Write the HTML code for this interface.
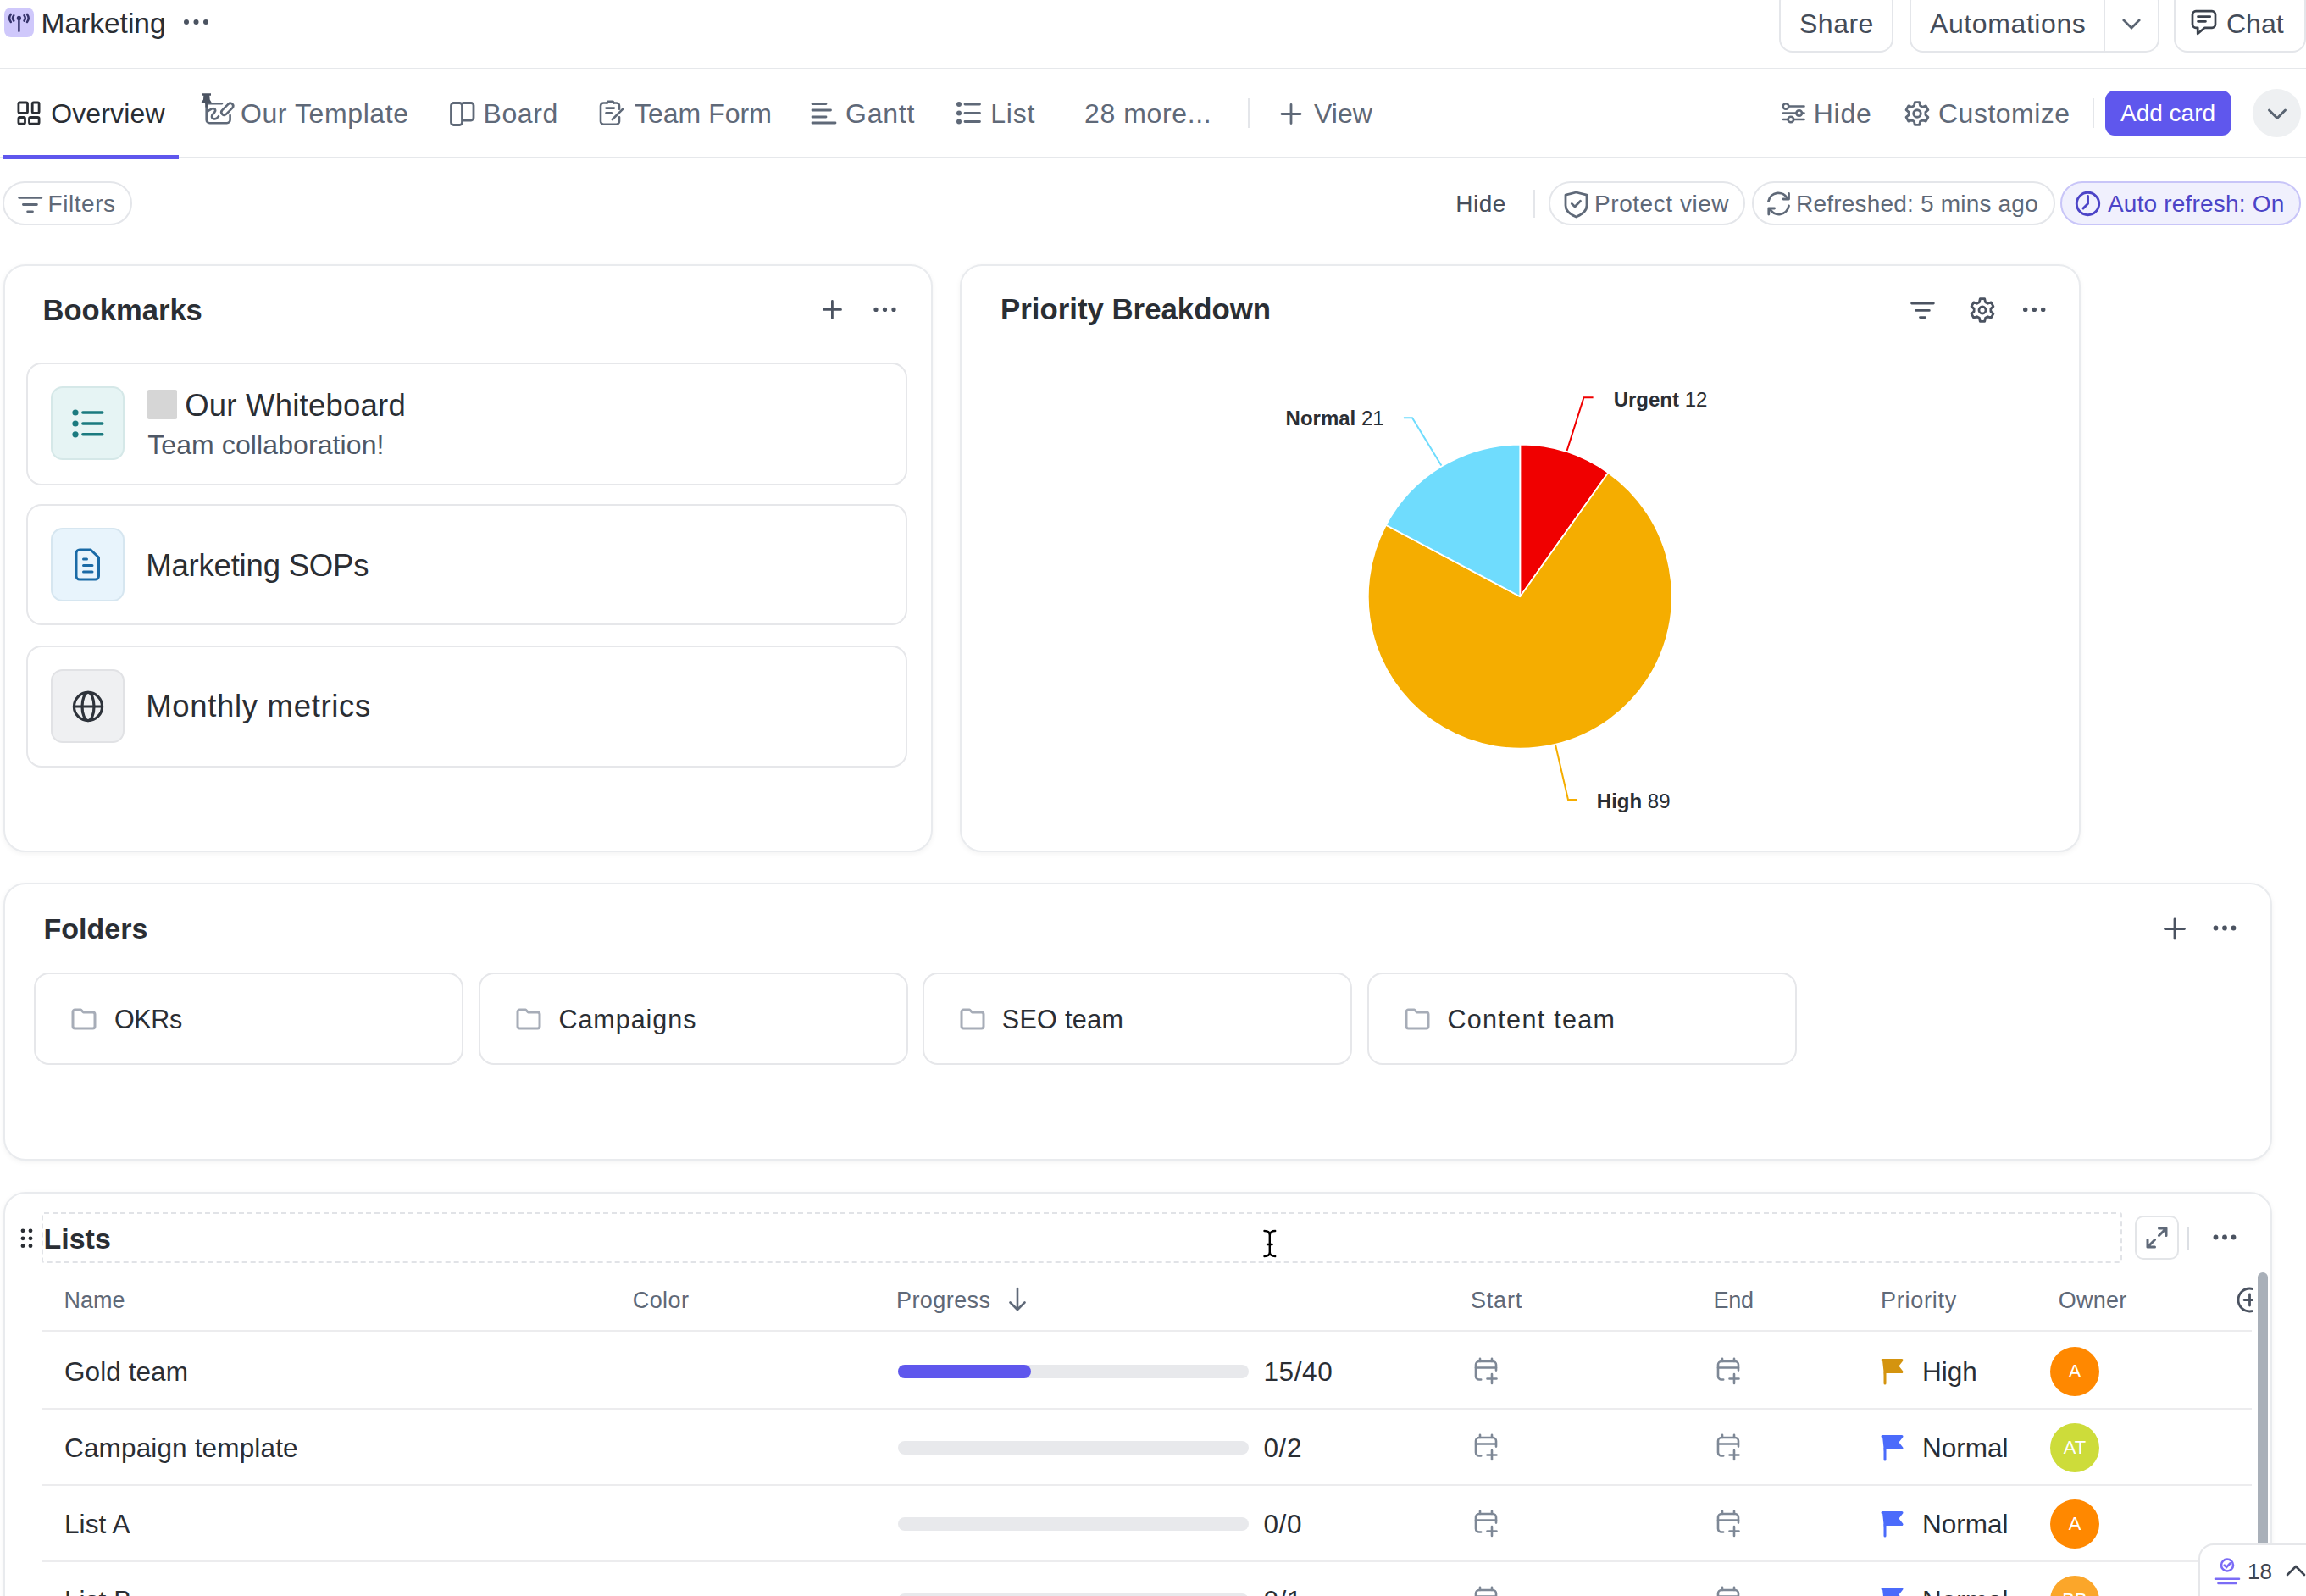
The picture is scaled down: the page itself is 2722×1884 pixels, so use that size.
<!DOCTYPE html>
<html><head><meta charset="utf-8">
<style>
html,body{margin:0;padding:0;width:2722px;height:1884px;overflow:hidden;background:#fff;}
body{position:relative;font-family:"Liberation Sans",sans-serif;color:#2a2e34;}
.t{position:absolute;line-height:1;white-space:nowrap;}
.a{position:absolute;}
.g{color:#5f6978;}
svg{position:absolute;overflow:visible;}
.btn{position:absolute;border:2px solid #e4e6ea;border-radius:14px;box-sizing:border-box;background:#fff;}
.pill{position:absolute;border:2px solid #e4e6ea;border-radius:26px;box-sizing:border-box;background:#fff;}
.card{position:absolute;border:2px solid #e9ebee;border-radius:26px;box-sizing:border-box;background:#fff;box-shadow:0 2px 6px rgba(0,0,0,0.05);}
.bm{position:absolute;border:2px solid #e6e7ea;border-radius:18px;box-sizing:border-box;background:#fff;left:31px;width:1040px;}
.ib{position:absolute;left:27px;width:87px;height:87px;border-radius:14px;box-sizing:border-box;border:2px solid #e3e6ea;}
.fd{position:absolute;top:1148px;height:109px;width:507px;border:2px solid #e6e7ea;border-radius:18px;box-sizing:border-box;background:#fff;}
.hl{position:absolute;height:2px;background:#ececee;left:49px;width:2609px;}
.bar{position:absolute;left:1060px;width:414px;height:16px;border-radius:8px;background:#e8e9ec;}
</style></head><body>

<!-- ===== TOP BAR ===== -->
<div class="a" style="left:5px;top:9px;width:35px;height:35px;border-radius:8px;background:#cfc8fb;"></div>
<svg style="left:5px;top:9px" width="35" height="35" viewBox="0 0 35 35">
  <g fill="none" stroke="#35336b" stroke-width="2.5" stroke-linecap="round">
    <line x1="17.4" y1="13" x2="17.4" y2="27.8"/>
    <path d="M7.8 7.9 Q4.4 12.4 7.8 16.9"/><path d="M11.3 9.2 Q8.7 12.4 11.3 15.6"/>
    <path d="M23.5 9.2 Q26.1 12.4 23.5 15.6"/><path d="M27 7.9 Q30.4 12.4 27 16.9"/>
  </g>
  <circle cx="17.4" cy="12.4" r="2.6" fill="#35336b"/>
</svg>
<div class="t" style="left:48.5px;top:11.4px;font-size:33.5px;">Marketing</div>
<svg style="left:216px;top:22px" width="32" height="8"><circle cx="4" cy="4" r="3" fill="#4b5361"/><circle cx="15.5" cy="4" r="3" fill="#4b5361"/><circle cx="27" cy="4" r="3" fill="#4b5361"/></svg>

<div class="btn" style="left:2100px;top:-14px;width:135px;height:76px;border-radius:16px"></div>
<div class="t" style="left:2124.0px;top:12.4px;font-size:32px;color:#444c59;letter-spacing:0.50px">Share</div>
<div class="btn" style="left:2254px;top:-14px;width:295px;height:76px;border-radius:16px"></div>
<div class="a" style="left:2483px;top:0;width:2px;height:60px;background:#e4e6ea"></div>
<div class="t" style="left:2278.0px;top:12.4px;font-size:32px;color:#444c59;letter-spacing:0.60px">Automations</div>
<svg style="left:2502px;top:20px" width="26" height="16" viewBox="0 0 26 16"><path d="M4 3 L14 13 L24 3" fill="none" stroke="#5a6472" stroke-width="2.7" stroke-linecap="butt" stroke-linejoin="miter"/></svg>
<div class="btn" style="left:2566px;top:-14px;width:156px;height:76px;border-radius:16px"></div>
<svg style="left:2586px;top:11px" width="32" height="32" viewBox="0 0 32 32"><path d="M6 2.2 H25 a4 4 0 0 1 4 4 V17.8 a4 4 0 0 1 -4 4 H16.5 L8.2 28.8 V21.8 H6 a4 4 0 0 1 -4 -4 V6.2 a4 4 0 0 1 4 -4 Z M8.5 8.7 H22.7 M8.5 14.3 H17.5" fill="none" stroke="#3b424d" stroke-width="2.7" stroke-linejoin="round" stroke-linecap="round"/></svg>
<div class="t" style="left:2628px;top:12.4px;font-size:32px;color:#444c59">Chat</div>

<div class="a" style="left:0;top:80px;width:2722px;height:2px;background:#e6e8eb"></div>

<!-- ===== TABS ===== -->
<!-- overview icon -->
<svg style="left:20px;top:119px" width="28" height="29" viewBox="0 0 28 29"><g fill="none" stroke="#2a2e34" stroke-width="2.8" stroke-linejoin="round">
<rect x="1.9" y="2" width="10.6" height="12.4" rx="1.6"/><rect x="18.2" y="2" width="7.9" height="12.4" rx="1.6"/>
<rect x="1.9" y="19.5" width="7.6" height="7.6" rx="1.6"/><rect x="14.5" y="19.5" width="11.6" height="7.6" rx="1.6"/></g></svg>
<div class="t" style="left:60.2px;top:118.4px;font-size:32px;letter-spacing:0.14px">Overview</div>
<!-- our template icon -->
<svg style="left:230px;top:105px" width="60" height="50" viewBox="0 0 60 50">
 <g fill="none" stroke="#5f6978" stroke-width="2.6" stroke-linecap="round" stroke-linejoin="round">
  <path d="M13.7 17.3 H31.8"/>
  <path d="M13.7 17.3 V36.5 a3.8 3.8 0 0 0 3.8 3.8 H37.8 a3.8 3.8 0 0 0 3.8 -3.8 V31"/>
  <path d="M14.8 26.8 C18 24.2 20.8 22 23 23.3 C25.5 25 23.5 27.6 21.5 29.5 C19.2 31.6 19.5 35.2 23 35.4 C25 35.5 26.8 33.8 28 32.2"/>
  <path d="M32.17 25.17 L39.67 17.67 A3.3 3.3 0 0 1 44.33 22.33 L36.83 29.83 A3.3 3.3 0 0 1 32.17 25.17 Z"/>
 </g>
 <path d="M8.5 5.2 H19 V7.7 H17.3 L17.7 12.5 L20 16.6 H7.2 L10 12.5 L10.3 7.7 H8.5 Z" fill="#4b5361"/>
 <path d="M13.6 16 V21.6" stroke="#4b5361" stroke-width="2.4"/>
</svg>
<div class="t g" style="left:284.0px;top:118.4px;font-size:32px;letter-spacing:0.59px">Our Template</div>
<!-- board -->
<svg style="left:531px;top:119px" width="30" height="30" viewBox="0 0 30 30"><path d="M14.5 2.5 H25 a3 3 0 0 1 3 3 V20 a3 3 0 0 1 -3 3 H14.5 M4.5 2.5 H11.5 a3 3 0 0 1 3 3 V25.5 a3 3 0 0 1 -3 3 H4.5 a3 3 0 0 1 -3 -3 V5.5 a3 3 0 0 1 3 -3 Z" fill="none" stroke="#5f6978" stroke-width="2.8" stroke-linejoin="round"/></svg>
<div class="t g" style="left:570.6px;top:118.4px;font-size:32px;letter-spacing:0.57px">Board</div>
<!-- team form -->
<svg style="left:690px;top:105px" width="60" height="50" viewBox="0 0 60 50"><g fill="none" stroke="#5f6978" stroke-width="2.6" stroke-linecap="round" stroke-linejoin="round">
<path d="M26.5 16.5 H22.5 a3.5 3.5 0 0 0 -3.5 3.5 V38.2 a3.5 3.5 0 0 0 3.5 3.5 H37.5 a3.5 3.5 0 0 0 3.5 -3.5 V33.2"/>
<path d="M34.5 16.5 H37.5 a3.5 3.5 0 0 1 3.5 3.5 V23.8"/>
<path d="M26.5 16.5 L27.6 14.7 H33.4 L34.5 16.5"/>
<path d="M25.5 22.6 H34.8 M25.5 28.4 H31.8 M32.8 36 L45 23.8"/></g></svg>
<div class="t g" style="left:749px;top:118.4px;font-size:32px;">Team Form</div>
<!-- gantt -->
<svg style="left:956px;top:119px" width="32" height="30" viewBox="0 0 32 30"><g stroke="#5f6978" stroke-width="2.8" stroke-linecap="round">
<path d="M3 3.5 H19 M3 11 H24.5 M3 19 H19 M3 26 H30"/></g></svg>
<div class="t g" style="left:998.0px;top:118.4px;font-size:32px;letter-spacing:0.75px">Gantt</div>
<!-- list -->
<svg style="left:1127px;top:119px" width="32" height="30" viewBox="0 0 32 30"><g fill="#5f6978"><circle cx="5" cy="4" r="3"/><circle cx="5" cy="14.5" r="3"/><circle cx="5" cy="24.5" r="3"/></g>
<g stroke="#5f6978" stroke-width="2.8" stroke-linecap="round"><path d="M12 4 H29.5 M12 14.5 H29.5 M12 24.5 H29.5"/></g></svg>
<div class="t g" style="left:1169.2px;top:118.4px;font-size:32px;letter-spacing:0.83px">List</div>
<div class="t g" style="left:1280.0px;top:118.4px;font-size:32px;letter-spacing:0.62px">28 more...</div>
<div class="a" style="left:1473px;top:116px;width:2px;height:35px;background:#e4e6ea"></div>
<svg style="left:1510px;top:121px" width="28" height="27" viewBox="0 0 28 27"><path d="M14 2.5 V24.5 M3 13.5 H25" stroke="#5f6978" stroke-width="2.8" stroke-linecap="round"/></svg>
<div class="t g" style="left:1551px;top:118.4px;font-size:32px;">View</div>

<!-- right side -->
<svg style="left:2102px;top:119px" width="30" height="28" viewBox="0 0 30 28"><g fill="none" stroke="#5f6978" stroke-width="2.6" stroke-linecap="round">
<path d="M9.5 6.5 H27.5 M3 14.5 H18 M25 14.5 H27.5 M3 22 H8 M15 22 H27.5"/><circle cx="6" cy="6.5" r="3.3"/><circle cx="21.7" cy="14.5" r="3.3"/><circle cx="11.9" cy="22" r="3.3"/></g></svg>
<div class="t g" style="left:2140.7px;top:118.4px;font-size:32px;letter-spacing:0.77px">Hide</div>
<svg style="left:2247px;top:118px" width="32" height="32" viewBox="0 0 24 24"><g fill="none" stroke="#5f6978" stroke-width="2.1" stroke-linejoin="round">
<path d="M10 2 H14 L14.7 5 L16.8 6.2 L19.7 5.2 L21.7 8.7 L19.4 10.8 V13.2 L21.7 15.3 L19.7 18.8 L16.8 17.8 L14.7 19 L14 22 H10 L9.3 19 L7.2 17.8 L4.3 18.8 L2.3 15.3 L4.6 13.2 V10.8 L2.3 8.7 L4.3 5.2 L7.2 6.2 L9.3 5 Z"/><circle cx="12" cy="12" r="3.2"/></g></svg>
<div class="t g" style="left:2288.0px;top:118.4px;font-size:32px;letter-spacing:0.50px">Customize</div>
<div class="a" style="left:2470px;top:116px;width:2px;height:35px;background:#e4e6ea"></div>
<div class="a" style="left:2485px;top:107px;width:149px;height:53px;border-radius:11px;background:#5f57ed"></div>
<div class="t" style="left:2503px;top:119.8px;font-size:28px;color:#fff">Add card</div>
<div class="a" style="left:2659px;top:105px;width:57px;height:57px;border-radius:50%;background:#eef0f2"></div>
<svg style="left:2676px;top:127px" width="24" height="16" viewBox="0 0 24 16"><path d="M2.5 3 L12 12.5 L21.5 3" fill="none" stroke="#5a6472" stroke-width="3" stroke-linecap="round" stroke-linejoin="round"/></svg>


<div class="a" style="left:0;top:185px;width:2722px;height:2px;background:#e6e8eb"></div>
<div class="a" style="left:3px;top:183px;width:208px;height:5px;background:#5f57ed"></div>

<!-- ===== PILLS ===== -->
<div class="pill" style="left:3px;top:214px;width:153px;height:52px;"></div>
<svg style="left:20px;top:229px" width="32" height="26" viewBox="0 0 32 26"><path d="M2.6 4.3 H28.9 M7.4 12.5 H23.4 M12.6 20.8 H18.5" stroke="#5f6978" stroke-width="2.8" stroke-linecap="round"/></svg>
<div class="t g" style="left:56.5px;top:226.8px;font-size:28px;letter-spacing:0.55px">Filters</div>
<div class="t g" style="left:1718.3px;top:226.8px;font-size:28px;color:#474f5c;letter-spacing:0.45px">Hide</div>
<div class="a" style="left:1810px;top:224px;width:2px;height:33px;background:#e4e6ea"></div>
<div class="pill" style="left:1828px;top:214px;width:232px;height:52px;"></div>
<svg style="left:1846px;top:225px" width="30" height="33" viewBox="0 0 30 33"><g fill="none" stroke="#5f6978" stroke-width="2.8" stroke-linejoin="round" stroke-linecap="round">
<path d="M14.5 2 L27 5.2 V17.5 C27 24 21 28.5 14.5 31 C8 28.5 2 24 2 17.5 V5.2 Z"/><path d="M9.3 15.5 L13 19 L19.5 12.2"/></g></svg>
<div class="t g" style="left:1882.1px;top:226.8px;font-size:28px;letter-spacing:0.54px">Protect view</div>
<div class="pill" style="left:2068px;top:214px;width:358px;height:52px;"></div>
<svg style="left:2084px;top:226px" width="32" height="29" viewBox="0 0 32 29"><g fill="none" stroke="#5f6978" stroke-width="2.8" stroke-linecap="round" stroke-linejoin="round">
<path d="M3.5 11.5 A12 12 0 0 1 26 8.5"/><path d="M27.5 2.5 V9 H21"/><path d="M27.5 17 A12 12 0 0 1 5 20.5"/><path d="M3.8 27 V20 H10.5"/></g></svg>
<div class="t g" style="left:2120.0px;top:226.8px;font-size:28px;letter-spacing:0.20px">Refreshed: 5 mins ago</div>
<div class="pill" style="left:2432px;top:214px;width:284px;height:52px;background:#f0f0fd;border-color:#c8c5f8"></div>
<svg style="left:2448px;top:224px" width="33" height="33" viewBox="0 0 33 33"><g fill="none" stroke="#4c44c7" stroke-width="2.9" stroke-linecap="round">
<circle cx="16.5" cy="16.5" r="13.2"/><path d="M16.5 7.5 V16.5 L11 22"/></g></svg>
<div class="t" style="left:2488.0px;top:226.8px;font-size:28px;color:#4c44c7;letter-spacing:0.19px">Auto refresh: On</div>


<!-- ===== BOOKMARKS ===== -->
<div class="card" style="left:4px;top:312px;width:1097px;height:694px;"></div>
<div class="t" style="left:50.5px;top:349px;font-size:34.6px;font-weight:700">Bookmarks</div>
<svg style="left:968px;top:351px" width="30" height="30" viewBox="0 0 30 30"><path d="M14.4 4.4 V24.6 M4.3 14.4 H24.5" stroke="#4b5361" stroke-width="2.8" stroke-linecap="round"/></svg>
<svg style="left:1029px;top:361px" width="32" height="9"><circle cx="5" cy="4.4" r="2.6" fill="#4b5361"/><circle cx="15.5" cy="4.4" r="2.6" fill="#4b5361"/><circle cx="26" cy="4.4" r="2.6" fill="#4b5361"/></svg>

<div class="bm" style="top:428px;height:145px;">
  <div class="ib" style="left:27px;top:26px;background:#e6f4f4;border-color:#d5e8e8"></div>
</div>
<svg style="left:82px;top:480px" width="44" height="40" viewBox="0 0 44 40"><g fill="#1b7a7f"><circle cx="7" cy="7" r="3.6"/><circle cx="7" cy="20" r="3.6"/><circle cx="7" cy="32.8" r="3.6"/></g>
<path d="M15.8 7 H38.8 M15.8 20 H38.8 M15.8 32.8 H38.8" stroke="#1b7a7f" stroke-width="3.4" stroke-linecap="round"/></svg>
<div class="a" style="left:174px;top:460px;width:35px;height:35px;border-radius:2px;background:#d6d6d6"></div>
<div class="t" style="left:218.2px;top:461.0px;font-size:36.5px;letter-spacing:0.22px">Our Whiteboard</div>
<div class="t" style="left:174.2px;top:508.6px;font-size:32px;color:#4f5866;letter-spacing:0.10px">Team collaboration!</div>

<div class="bm" style="top:595px;height:143px;">
  <div class="ib" style="left:27px;top:26px;background:#e8f4fc;border-color:#d6e6f0"></div>
</div>
<svg style="left:88px;top:647px" width="32" height="40" viewBox="0 0 32 40"><g fill="none" stroke="#1a6aa6" stroke-width="3" stroke-linecap="round" stroke-linejoin="round">
<path d="M6 2 H19 L28.5 11 V33 a4 4 0 0 1 -4 4 H6 a4 4 0 0 1 -4 -4 V6 a4 4 0 0 1 4 -4 Z"/><path d="M10.5 13 H14.5 M10.5 20.5 H21 M10.5 28 H21"/></g></svg>
<div class="t" style="left:172.2px;top:649.8px;font-size:36.5px;letter-spacing:-0.19px">Marketing SOPs</div>

<div class="bm" style="top:762px;height:144px;">
  <div class="ib" style="left:27px;top:26px;background:#eff0f2;border-color:#e1e2e5"></div>
</div>
<svg style="left:84px;top:814px" width="40" height="40" viewBox="0 0 40 40"><g fill="none" stroke="#2e333b" stroke-width="3.2">
<circle cx="20" cy="20" r="16.6"/><ellipse cx="20" cy="20" rx="7" ry="16.6"/><path d="M3.4 20 H36.6"/></g></svg>
<div class="t" style="left:172.2px;top:816.4px;font-size:36.5px;letter-spacing:0.68px">Monthly metrics</div>


<!-- ===== PRIORITY ===== -->
<div class="card" style="left:1133px;top:312px;width:1323px;height:694px;"></div>
<div class="t" style="left:1181px;top:348.2px;font-size:34.8px;font-weight:700">Priority Breakdown</div>
<svg style="left:2253px;top:352px" width="34" height="28" viewBox="0 0 34 28"><path d="M3.6 6.1 H29.3 M8.6 14.4 H24.3 M13.5 22.6 H19.4" stroke="#4b5361" stroke-width="2.9" stroke-linecap="round"/></svg>
<svg style="left:2323.5px;top:349.5px" width="32" height="32" viewBox="0 0 24 24"><g fill="none" stroke="#4b5361" stroke-width="2.1" stroke-linejoin="round">
<path d="M10 2 H14 L14.7 5 L16.8 6.2 L19.7 5.2 L21.7 8.7 L19.4 10.8 V13.2 L21.7 15.3 L19.7 18.8 L16.8 17.8 L14.7 19 L14 22 H10 L9.3 19 L7.2 17.8 L4.3 18.8 L2.3 15.3 L4.6 13.2 V10.8 L2.3 8.7 L4.3 5.2 L7.2 6.2 L9.3 5 Z"/><circle cx="12" cy="12" r="3"/></g></svg>
<svg style="left:2386px;top:361px" width="32" height="9"><circle cx="4.7" cy="4.4" r="2.7" fill="#4b5361"/><circle cx="15.3" cy="4.4" r="2.7" fill="#4b5361"/><circle cx="25.7" cy="4.4" r="2.7" fill="#4b5361"/></svg>
<svg style="left:0;top:0" width="2722" height="1884"><path d="M1794.3 704.2 L1794.3 524.7 A179.5 179.5 0 0 1 1898.3 557.9 Z" fill="#f00000" stroke="#fff" stroke-width="1.8" stroke-linejoin="round"/><path d="M1794.3 704.2 L1898.3 557.9 A179.5 179.5 0 1 1 1635.9 619.8 Z" fill="#f5ad00" stroke="#fff" stroke-width="1.8" stroke-linejoin="round"/><path d="M1794.3 704.2 L1635.9 619.8 A179.5 179.5 0 0 1 1794.3 524.7 Z" fill="#6fdcfd" stroke="#fff" stroke-width="1.8" stroke-linejoin="round"/><path d="M1849.6 532 L1869.5 469.3 H1880.6" fill="none" stroke="#f00000" stroke-width="2"/><path d="M1701.4 549.6 L1667 493.2 H1656.9" fill="none" stroke="#6fdcfd" stroke-width="2"/><path d="M1836 879 L1851 944 H1862" fill="none" stroke="#f5ad00" stroke-width="2"/></svg>
<div class="t" style="left:1517.6px;top:482.2px;font-size:24px;"><b>Normal</b> 21</div>
<div class="t" style="left:1904.7px;top:460.4px;font-size:24px;"><b>Urgent</b> 12</div>
<div class="t" style="left:1884.8px;top:934.1px;font-size:24px;"><b>High</b> 89</div>


<!-- ===== FOLDERS ===== -->
<div class="card" style="left:4px;top:1042px;width:2678px;height:328px;"></div>
<div class="t" style="left:51.5px;top:1079.2px;font-size:34px;font-weight:700">Folders</div>
<svg style="left:2552px;top:1082px" width="30" height="30" viewBox="0 0 30 30"><path d="M15 3 V26 M3.5 14.5 H26.5" stroke="#4b5361" stroke-width="2.8" stroke-linecap="round"/></svg>
<svg style="left:2612px;top:1091px" width="32" height="9"><circle cx="3.5" cy="4.5" r="2.9" fill="#4b5361"/><circle cx="14" cy="4.5" r="2.9" fill="#4b5361"/><circle cx="24.5" cy="4.5" r="2.9" fill="#4b5361"/></svg>
<div class="fd" style="left:40px"></div><svg style="left:84px;top:1189px" width="32" height="28" viewBox="0 0 32 28"><path d="M4.5 3 H11.5 L14.5 6 H25.5 a2.5 2.5 0 0 1 2.5 2.5 V22.5 a2.5 2.5 0 0 1 -2.5 2.5 H4.5 a2.5 2.5 0 0 1 -2.5 -2.5 V5.5 a2.5 2.5 0 0 1 2.5 -2.5 Z" fill="none" stroke="#a7adb8" stroke-width="3" stroke-linejoin="round"/></svg><div class="t" style="left:135.0px;top:1187.7px;font-size:30.5px;letter-spacing:-0.40px">OKRs</div><div class="fd" style="left:565px"></div><svg style="left:609px;top:1189px" width="32" height="28" viewBox="0 0 32 28"><path d="M4.5 3 H11.5 L14.5 6 H25.5 a2.5 2.5 0 0 1 2.5 2.5 V22.5 a2.5 2.5 0 0 1 -2.5 2.5 H4.5 a2.5 2.5 0 0 1 -2.5 -2.5 V5.5 a2.5 2.5 0 0 1 2.5 -2.5 Z" fill="none" stroke="#a7adb8" stroke-width="3" stroke-linejoin="round"/></svg><div class="t" style="left:659.4px;top:1187.7px;font-size:30.5px;letter-spacing:0.97px">Campaigns</div><div class="fd" style="left:1089px"></div><svg style="left:1133px;top:1189px" width="32" height="28" viewBox="0 0 32 28"><path d="M4.5 3 H11.5 L14.5 6 H25.5 a2.5 2.5 0 0 1 2.5 2.5 V22.5 a2.5 2.5 0 0 1 -2.5 2.5 H4.5 a2.5 2.5 0 0 1 -2.5 -2.5 V5.5 a2.5 2.5 0 0 1 2.5 -2.5 Z" fill="none" stroke="#a7adb8" stroke-width="3" stroke-linejoin="round"/></svg><div class="t" style="left:1182.7px;top:1187.7px;font-size:30.5px;letter-spacing:0.36px">SEO team</div><div class="fd" style="left:1614px"></div><svg style="left:1658px;top:1189px" width="32" height="28" viewBox="0 0 32 28"><path d="M4.5 3 H11.5 L14.5 6 H25.5 a2.5 2.5 0 0 1 2.5 2.5 V22.5 a2.5 2.5 0 0 1 -2.5 2.5 H4.5 a2.5 2.5 0 0 1 -2.5 -2.5 V5.5 a2.5 2.5 0 0 1 2.5 -2.5 Z" fill="none" stroke="#a7adb8" stroke-width="3" stroke-linejoin="round"/></svg><div class="t" style="left:1708.4px;top:1187.7px;font-size:30.5px;letter-spacing:1.32px">Content team</div>
<!-- lists card -->
<div class="card" style="left:4px;top:1407px;width:2678px;height:600px;"></div>
<svg style="left:0;top:0" width="2722" height="1884"><rect x="50" y="1432" width="2454" height="58" rx="2" fill="none" stroke="#e1e3e7" stroke-width="2" stroke-dasharray="6 4"/></svg>
<svg style="left:22px;top:1448px" width="20" height="28"><g fill="#2a2e34"><circle cx="5" cy="4.8" r="2.4"/><circle cx="14" cy="4.8" r="2.4"/><circle cx="5" cy="13.8" r="2.4"/><circle cx="14" cy="13.8" r="2.4"/><circle cx="5" cy="22.7" r="2.4"/><circle cx="14" cy="22.7" r="2.4"/></g></svg>
<div class="t" style="left:51.5px;top:1444.8px;font-size:34px;font-weight:700">Lists</div>
<svg style="left:1490px;top:1450px" width="18" height="36" viewBox="0 0 18 36"><g fill="none" stroke="#000" stroke-width="2.4" stroke-linecap="round"><path d="M2.5 3 C6 3 8.8 4.5 8.8 8 V28 C8.8 31.5 6 33 2.5 33 M15.2 3 C11.6 3 8.8 4.5 8.8 8 M15.2 33 C11.6 33 8.8 31.5 8.8 28 M6 19 H11.6"/></g></svg>
<div class="a" style="left:2520px;top:1435px;width:52px;height:52px;border:2px solid #e3e5e8;border-radius:10px;box-sizing:border-box"></div>
<svg style="left:2532px;top:1447px" width="28" height="28" viewBox="0 0 28 28"><g fill="none" stroke="#5f6978" stroke-width="3" stroke-linecap="round" stroke-linejoin="round"><path d="M16.5 3 H25 V11.5 M25 3 L16.5 11.5 M3 16.5 V25 H11.5 M3 25 L11.5 16.5"/></g></svg>
<div class="a" style="left:2582px;top:1448px;width:2px;height:27px;background:#dcdfe4"></div>
<svg style="left:2612px;top:1456px" width="32" height="9"><circle cx="3.5" cy="4.5" r="2.9" fill="#4b5361"/><circle cx="14" cy="4.5" r="2.9" fill="#4b5361"/><circle cx="24.5" cy="4.5" r="2.9" fill="#4b5361"/></svg>

<div class="t g" style="left:75.6px;top:1522.4px;font-size:27px;letter-spacing:0.00px">Name</div>
<div class="t g" style="left:746.8px;top:1522.4px;font-size:27px;letter-spacing:0.40px">Color</div>
<div class="t g" style="left:1058.0px;top:1522.4px;font-size:27px;letter-spacing:0.43px">Progress</div>
<svg style="left:1188px;top:1518px" width="26" height="32" viewBox="0 0 26 32"><path d="M13 3 V28 M4.5 19.5 L13 28 L21.5 19.5" fill="none" stroke="#5f6978" stroke-width="2.6" stroke-linecap="round" stroke-linejoin="round"/></svg>
<div class="t g" style="left:1735.9px;top:1522.4px;font-size:27px;letter-spacing:0.85px">Start</div>
<div class="t g" style="left:2022.4px;top:1522.4px;font-size:27px;letter-spacing:-0.15px">End</div>
<div class="t g" style="left:2220.0px;top:1522.4px;font-size:27px;letter-spacing:0.76px">Priority</div>
<div class="t g" style="left:2429.7px;top:1522.4px;font-size:27px;letter-spacing:0.28px">Owner</div>
<div class="a" style="left:2638px;top:1517px;width:21px;height:36px;overflow:hidden"><svg style="left:0;top:0" width="36" height="36" viewBox="0 0 36 36"><g fill="none" stroke="#4b5361" stroke-width="2.8" stroke-linecap="round"><circle cx="17.5" cy="17.5" r="13.5"/><path d="M17.5 11 V24 M11 17.5 H24"/></g></svg></div>
<div class="hl" style="top:1570px"></div>
<div class="t" style="left:76px;top:1603.8px;font-size:31.5px;letter-spacing:0.08px">Gold team</div><div class="bar" style="top:1611.0px"></div><div class="a" style="left:1060px;top:1611.0px;width:157px;height:16px;border-radius:8px;background:#5f57ed"></div><div class="t" style="left:1491.5px;top:1603.8px;font-size:31.5px;letter-spacing:0.6px">15/40</div><svg style="left:1740px;top:1602.0px" width="30" height="34" viewBox="0 0 30 34"><g fill="none" stroke="#7e8896" stroke-width="2.6" stroke-linecap="round"><path d="M8.2 26.5 H6 a4 4 0 0 1 -4 -4 V9 a4 4 0 0 1 4 -4 H22 a4 4 0 0 1 4 4 V15.6"/><path d="M2 12.5 H26 M7 1.8 V5 M21 1.8 V5 M21 20 V31 M15.5 25.5 H26.5"/></g></svg><svg style="left:2025.5px;top:1602.0px" width="30" height="34" viewBox="0 0 30 34"><g fill="none" stroke="#7e8896" stroke-width="2.6" stroke-linecap="round"><path d="M8.2 26.5 H6 a4 4 0 0 1 -4 -4 V9 a4 4 0 0 1 4 -4 H22 a4 4 0 0 1 4 4 V15.6"/><path d="M2 12.5 H26 M7 1.8 V5 M21 1.8 V5 M21 20 V31 M15.5 25.5 H26.5"/></g></svg><svg style="left:2220px;top:1603.5px" width="28" height="32" viewBox="0 0 28 32"><path d="M2 1.5 H25 L19.5 8.5 L25 15.5 H5 V29" fill="#d4940f" stroke="#d4940f" stroke-width="3" stroke-linejoin="round" stroke-linecap="round"/></svg><div class="t" style="left:2269px;top:1603.8px;font-size:31.5px;">High</div><div class="a" style="left:2420px;top:1589.5px;width:58px;height:58px;border-radius:50%;background:#ff8800;color:#fff;font-size:22px;line-height:58px;text-align:center">A</div><div class="hl" style="top:1662.0px"></div>
<div class="t" style="left:76px;top:1693.8px;font-size:31.5px;letter-spacing:0.15px">Campaign template</div><div class="bar" style="top:1701.0px"></div><div class="t" style="left:1491.5px;top:1693.8px;font-size:31.5px;letter-spacing:0.6px">0/2</div><svg style="left:1740px;top:1692.0px" width="30" height="34" viewBox="0 0 30 34"><g fill="none" stroke="#7e8896" stroke-width="2.6" stroke-linecap="round"><path d="M8.2 26.5 H6 a4 4 0 0 1 -4 -4 V9 a4 4 0 0 1 4 -4 H22 a4 4 0 0 1 4 4 V15.6"/><path d="M2 12.5 H26 M7 1.8 V5 M21 1.8 V5 M21 20 V31 M15.5 25.5 H26.5"/></g></svg><svg style="left:2025.5px;top:1692.0px" width="30" height="34" viewBox="0 0 30 34"><g fill="none" stroke="#7e8896" stroke-width="2.6" stroke-linecap="round"><path d="M8.2 26.5 H6 a4 4 0 0 1 -4 -4 V9 a4 4 0 0 1 4 -4 H22 a4 4 0 0 1 4 4 V15.6"/><path d="M2 12.5 H26 M7 1.8 V5 M21 1.8 V5 M21 20 V31 M15.5 25.5 H26.5"/></g></svg><svg style="left:2220px;top:1693.5px" width="28" height="32" viewBox="0 0 28 32"><path d="M2 1.5 H25 L19.5 8.5 L25 15.5 H5 V29" fill="#4b6bfb" stroke="#4b6bfb" stroke-width="3" stroke-linejoin="round" stroke-linecap="round"/></svg><div class="t" style="left:2269px;top:1693.8px;font-size:31.5px;">Normal</div><div class="a" style="left:2420px;top:1679.5px;width:58px;height:58px;border-radius:50%;background:#cddc3a;color:#fff;font-size:22px;line-height:58px;text-align:center">AT</div><div class="hl" style="top:1752.0px"></div>
<div class="t" style="left:76px;top:1783.8px;font-size:31.5px;letter-spacing:0.08px">List A</div><div class="bar" style="top:1791.0px"></div><div class="t" style="left:1491.5px;top:1783.8px;font-size:31.5px;letter-spacing:0.6px">0/0</div><svg style="left:1740px;top:1782.0px" width="30" height="34" viewBox="0 0 30 34"><g fill="none" stroke="#7e8896" stroke-width="2.6" stroke-linecap="round"><path d="M8.2 26.5 H6 a4 4 0 0 1 -4 -4 V9 a4 4 0 0 1 4 -4 H22 a4 4 0 0 1 4 4 V15.6"/><path d="M2 12.5 H26 M7 1.8 V5 M21 1.8 V5 M21 20 V31 M15.5 25.5 H26.5"/></g></svg><svg style="left:2025.5px;top:1782.0px" width="30" height="34" viewBox="0 0 30 34"><g fill="none" stroke="#7e8896" stroke-width="2.6" stroke-linecap="round"><path d="M8.2 26.5 H6 a4 4 0 0 1 -4 -4 V9 a4 4 0 0 1 4 -4 H22 a4 4 0 0 1 4 4 V15.6"/><path d="M2 12.5 H26 M7 1.8 V5 M21 1.8 V5 M21 20 V31 M15.5 25.5 H26.5"/></g></svg><svg style="left:2220px;top:1783.5px" width="28" height="32" viewBox="0 0 28 32"><path d="M2 1.5 H25 L19.5 8.5 L25 15.5 H5 V29" fill="#4b6bfb" stroke="#4b6bfb" stroke-width="3" stroke-linejoin="round" stroke-linecap="round"/></svg><div class="t" style="left:2269px;top:1783.8px;font-size:31.5px;">Normal</div><div class="a" style="left:2420px;top:1769.5px;width:58px;height:58px;border-radius:50%;background:#ff8800;color:#fff;font-size:22px;line-height:58px;text-align:center">A</div><div class="hl" style="top:1842.0px"></div>
<div class="t" style="left:76px;top:1873.8px;font-size:31.5px;letter-spacing:0.08px">List B</div><div class="bar" style="top:1881.0px"></div><div class="t" style="left:1491.5px;top:1873.8px;font-size:31.5px;letter-spacing:0.6px">0/1</div><svg style="left:1740px;top:1872.0px" width="30" height="34" viewBox="0 0 30 34"><g fill="none" stroke="#7e8896" stroke-width="2.6" stroke-linecap="round"><path d="M8.2 26.5 H6 a4 4 0 0 1 -4 -4 V9 a4 4 0 0 1 4 -4 H22 a4 4 0 0 1 4 4 V15.6"/><path d="M2 12.5 H26 M7 1.8 V5 M21 1.8 V5 M21 20 V31 M15.5 25.5 H26.5"/></g></svg><svg style="left:2025.5px;top:1872.0px" width="30" height="34" viewBox="0 0 30 34"><g fill="none" stroke="#7e8896" stroke-width="2.6" stroke-linecap="round"><path d="M8.2 26.5 H6 a4 4 0 0 1 -4 -4 V9 a4 4 0 0 1 4 -4 H22 a4 4 0 0 1 4 4 V15.6"/><path d="M2 12.5 H26 M7 1.8 V5 M21 1.8 V5 M21 20 V31 M15.5 25.5 H26.5"/></g></svg><svg style="left:2220px;top:1873.5px" width="28" height="32" viewBox="0 0 28 32"><path d="M2 1.5 H25 L19.5 8.5 L25 15.5 H5 V29" fill="#4b6bfb" stroke="#4b6bfb" stroke-width="3" stroke-linejoin="round" stroke-linecap="round"/></svg><div class="t" style="left:2269px;top:1873.8px;font-size:31.5px;">Normal</div><div class="a" style="left:2420px;top:1859.5px;width:58px;height:58px;border-radius:50%;background:#fba62a;color:#fff;font-size:22px;line-height:58px;text-align:center">BB</div>
<div class="a" style="left:2665px;top:1502px;width:12px;height:400px;border-radius:6px;background:#a9b0b9"></div>
<div class="a" style="left:2595px;top:1822px;width:160px;height:100px;border:2px solid #e6e7ea;border-radius:18px;box-sizing:border-box;background:#fff"></div>
<svg style="left:2612px;top:1838px" width="34" height="34" viewBox="0 0 34 34"><g fill="none" stroke="#7b6cf6" stroke-width="2.6" stroke-linecap="round"><circle cx="17" cy="9.5" r="7"/><path d="M13.8 9.7 L16.2 12 L20.4 7.5 M3 25.8 H31 M6.5 31 H27.5"/></g></svg>
<div class="t" style="left:2653px;top:1842px;font-size:26px;color:#3f4652">18</div>
<svg style="left:2697px;top:1845px" width="28" height="18" viewBox="0 0 28 18"><path d="M3 14 L13 4 L23 14" fill="none" stroke="#3f4652" stroke-width="2.6" stroke-linecap="round" stroke-linejoin="round"/></svg>


<!-- ===== LISTS ===== -->


</body></html>
